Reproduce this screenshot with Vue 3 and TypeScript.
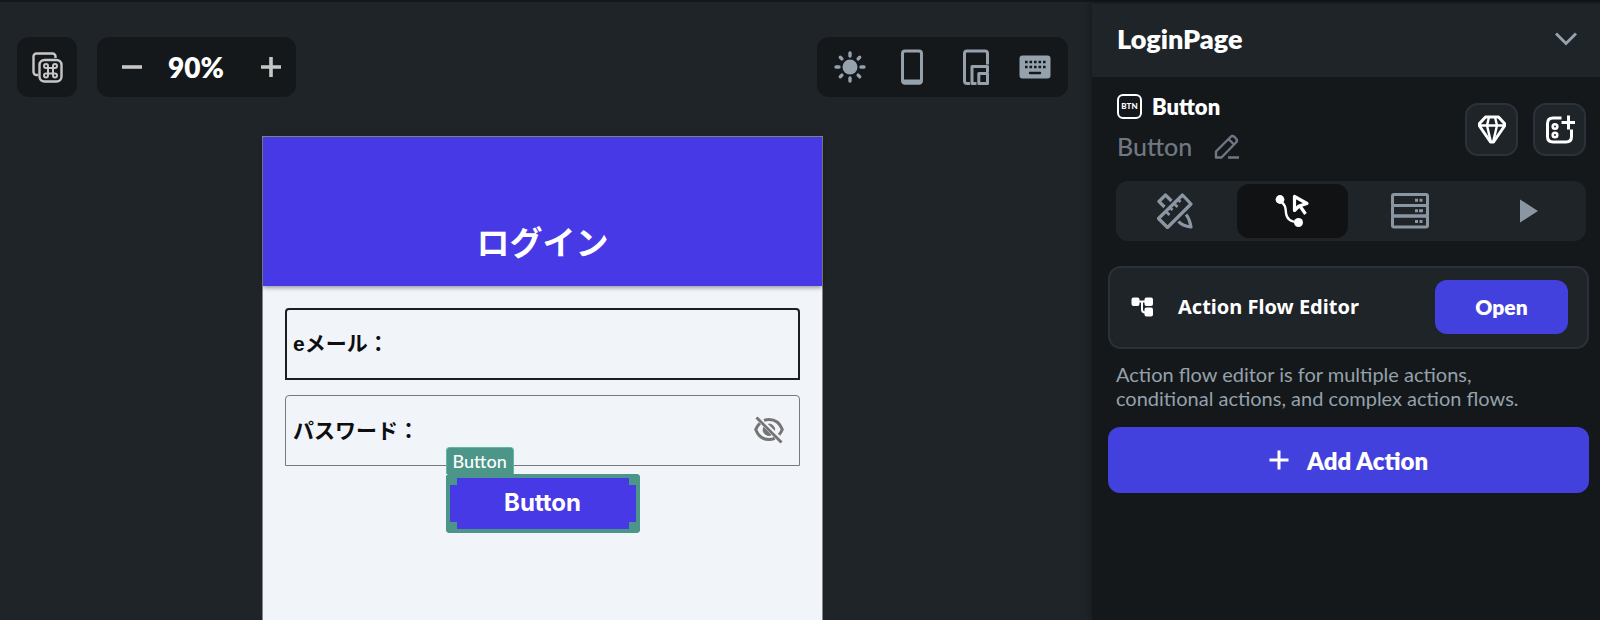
<script setup lang="ts">
import { ref } from 'vue'

type Tab = 'design' | 'actions' | 'backend' | 'preview'

const zoom = ref<number>(90)
const email = ref<string>('')
const password = ref<string>('')
const activeTab = ref<Tab>('actions')

const tabs: { id: Tab; label: string }[] = [
  { id: 'design', label: 'Design' },
  { id: 'actions', label: 'Actions' },
  { id: 'backend', label: 'Backend query' },
  { id: 'preview', label: 'Preview' },
]

function changeZoom(step: number): void {
  zoom.value = Math.min(200, Math.max(10, zoom.value + step))
}
</script>

<template>
  <div class="app">
    <main class="canvas">
      <div class="toolbar">
        <button class="tool square" type="button" aria-label="Shortcuts">
          <svg width="32" height="32" viewBox="0 0 32 32" fill="none" stroke="#c6c6c6" stroke-width="2.400">
            <path d="M7 24H5.500a3 3 0 0 1-3-3V5.500a3 3 0 0 1 3-3h16a3 3 0 0 1 3 3V7" />
            <rect x="8.500" y="9" width="22" height="21.500" rx="5" />
            <path d="M17 17h5v5.500h-5zM17 17h-2a2 2 0 1 1 2-2zM22 17v-2a2 2 0 1 1 2 2zM22 22.500h2a2 2 0 1 1-2 2zM17 22.500v2a2 2 0 1 1-2-2z" stroke-width="2" />
          </svg>
        </button>
        <div class="tool zoomer">
          <button type="button" aria-label="Zoom out" @click="changeZoom(-10)">
            <svg width="20" height="20" viewBox="0 0 20 20" stroke="#c6c6c6" stroke-width="3.600"><path d="M0 10h20" /></svg>
          </button>
          <span class="zoom-value">{{ zoom }}%</span>
          <button type="button" aria-label="Zoom in" @click="changeZoom(10)">
            <svg width="20" height="20" viewBox="0 0 20 20" stroke="#c6c6c6" stroke-width="3.600"><path d="M0 10h20M10 0v20" /></svg>
          </button>
        </div>
        <div class="tool devices">
          <button type="button" aria-label="Light mode">
            <svg width="32" height="32" viewBox="0 0 32 32" stroke="#95a1ac" stroke-width="3.400" stroke-linecap="round">
              <circle cx="16" cy="16" r="7.500" fill="#95a1ac" stroke="none" />
              <path d="M16 2v3M16 27v3M2 16h3M27 16h3M6.300 6.300l1.600 1.600M24.100 24.100l1.600 1.600M6.300 25.700l1.600-1.600M24.100 7.900l1.600-1.600" />
            </svg>
          </button>
          <button class="size" type="button" aria-label="Phone size">
            <svg width="24" height="36" viewBox="0 0 24 36">
              <rect x="2.500" y="2" width="19" height="32" rx="2.500" fill="none" stroke="#95a1ac" stroke-width="3" />
              <path d="M2 30.500h20v2.500q0 2.500-2.500 2.500h-15q-2.500 0-2.500-2.500z" fill="#95a1ac" />
            </svg>
          </button>
          <button class="sizes" type="button" aria-label="Responsive sizes">
            <svg width="26" height="36" viewBox="0 0 26 36" fill="none" stroke="#95a1ac" stroke-width="3" stroke-linejoin="round">
              <path d="M7 34.500H4q-2.500 0-2.500-2.500V4.500Q1.500 2 4 2h18q2.500 0 2.500 2.500v11" />
              <path d="M13.500 34.500H9V17.500h15.500v6" />
              <rect x="15.800" y="24.500" width="8.700" height="10" />
            </svg>
          </button>
          <button type="button" aria-label="Keyboard">
            <svg width="32" height="24" viewBox="0 0 32 24">
              <rect x="0.500" y="0.500" width="31" height="23" rx="3" fill="#95a1ac" />
              <path d="M6 7h22M6 12h22" stroke="#14181b" stroke-width="2.600" stroke-dasharray="2.600 1.900" />
              <path d="M11 18h10" stroke="#14181b" stroke-width="2.400" stroke-linecap="round" />
            </svg>
          </button>
        </div>
      </div>

      <section class="phone" lang="ja">
        <header class="phone-bar"><h1>ログイン</h1></header>
        <form class="phone-body" @submit.prevent>
          <div class="field focused">
            <label for="email">eメール：</label>
            <input id="email" v-model="email" type="email" />
          </div>
          <div class="field">
            <label for="password">パスワード：</label>
            <input id="password" v-model="password" type="password" />
            <button class="eye" type="button" aria-label="Show password">
              <svg width="32" height="30" viewBox="0 0 32 30" fill="none" stroke="#757575" stroke-width="3">
                <path d="M11 6.400Q13.500 5.500 16 5.500c6 0 11 4 13.300 10q-1.200 3-3.300 5.200M6.800 9.300Q4 12 2.700 15.500c2.300 6 7.300 10 13.300 10q3 0 5.700-1.100" />
                <path d="M15.500 10a5.800 5.800 0 0 1 6.200 6.200zM10.500 13.500a5.800 5.800 0 0 0 7.500 7.600z" fill="#757575" stroke-width="1" />
                <path d="M3.500 3.500l25 25" />
              </svg>
            </button>
          </div>
          <div class="selection">
            <span class="selection-tag">Button</span>
            <button class="submit" type="submit">Button</button>
            <i class="handle tl"></i><i class="handle tr"></i><i class="handle bl"></i><i class="handle br"></i>
          </div>
        </form>
      </section>
    </main>

    <aside class="panel">
      <header class="panel-head">
        <h2>LoginPage</h2>
        <button type="button" aria-label="Collapse">
          <svg width="22" height="14" viewBox="0 0 22 14" fill="none" stroke="#95a1ac" stroke-width="3"><path d="M1 1.500l10 10 10-10" /></svg>
        </button>
      </header>

      <div class="widget">
        <div class="names">
          <div class="type">
            <span class="btn-icon">BTN</span>
            <strong>Button</strong>
          </div>
          <div class="name">
            <span>Button</span>
            <button type="button" aria-label="Rename">
              <svg width="26" height="26" viewBox="0 0 26 26" fill="none" stroke="#6f7882" stroke-width="2.400" stroke-linejoin="round">
                <path d="M2 24.500v-6L16.500 4q2-2 4 0l1.500 1.500q2 2 0 4L7.500 24.500zM14.500 6l5.500 5.500M14 24.500h11" />
              </svg>
            </button>
          </div>
        </div>
        <button class="action" type="button" aria-label="Theme">
          <svg width="30" height="30" viewBox="0 0 30 30" fill="none" stroke="#fff" stroke-width="3" stroke-linejoin="round">
            <path d="M8.500 2h13l6 6.500v2.500L16.500 27h-3L2.500 11V8.500z" />
            <path d="M2.500 10.500h25M12 2l-2 8.500 4 17M18 2l2 8.500-4 17" stroke-width="2.400" />
          </svg>
        </button>
        <button class="action" type="button" aria-label="Create component">
          <svg width="30" height="30" viewBox="0 0 30 30" fill="none" stroke="#fff" stroke-width="3">
            <path d="M16.500 3H8q-5.500 0-5.500 5.500v13q0 5.500 5.500 5.500h13q5.500 0 5.500-5.500v-7" />
            <path d="M23.500 0.500v14M16.500 7.500h13.500" />
            <circle cx="10" cy="11.500" r="2.300" stroke-width="2.600" />
            <circle cx="10" cy="20" r="2.300" stroke-width="2.600" />
          </svg>
        </button>
      </div>

      <div class="tabs" role="tablist">
        <button
          v-for="tab in tabs"
          :key="tab.id"
          type="button"
          role="tab"
          :aria-label="tab.label"
          :aria-selected="activeTab === tab.id"
          :class="{ active: activeTab === tab.id }"
          @click="activeTab = tab.id"
        >
          <svg v-if="tab.id === 'design'" width="36" height="36" viewBox="0 0 36 36" fill="none" stroke="currentColor" stroke-width="3.200" stroke-linejoin="round">
            <path d="M25.500 2l8.500 9-23.500 23.500-9-9z" />
            <path d="M9 18.500l3.500 3.500M13 14.500l2.500 2.500M17 10.500l3.500 3.500M21 6.500l2.500 2.500" stroke-width="2.600" />
            <path d="M7.500 14L2 8.500 8.500 2l6 6" />
            <path d="M29 21.500q3.500 4 5 12.500Q25.500 33 21.500 28.500" />
          </svg>
          <svg v-else-if="tab.id === 'actions'" width="36" height="36" viewBox="0 0 36 36" fill="none" stroke="currentColor">
            <circle cx="6" cy="6.500" r="4.400" fill="currentColor" stroke="none" />
            <circle cx="24.500" cy="29.500" r="4.500" fill="currentColor" stroke="none" />
            <path d="M6 8c6 4 5.500 7 6 12s4 9 12 9" stroke-width="2.400" />
            <path d="M20.500 3.500v14l4.500-4.500 8-2.500zM26 13l5.500 8" stroke-width="3.200" stroke-linejoin="round" />
          </svg>
          <svg v-else-if="tab.id === 'backend'" width="38" height="36" viewBox="0 0 38 36" fill="none" stroke="currentColor" stroke-width="3">
            <rect x="1.500" y="1.500" width="35" height="11" rx="1.500" />
            <rect x="1.500" y="12.500" width="35" height="10.500" rx="1.500" />
            <rect x="1.500" y="23" width="35" height="11" rx="1.500" />
            <path d="M24 7.200h3M28.500 7.200h3M24 17.800h3M28 17.800h4M24 28.500h3M28.500 28.500h3" />
          </svg>
          <svg v-else width="22" height="24" viewBox="0 0 22 24" fill="currentColor"><path d="M4 0.500L22 12 4 23.500z" /></svg>
        </button>
      </div>

      <section class="flow-card">
        <svg width="22" height="20" viewBox="0 0 22 20" fill="#fff">
          <rect x="0.500" y="0.500" width="8" height="8.500" rx="2" />
          <rect x="13.500" y="0.500" width="8.500" height="8.500" rx="2" />
          <rect x="13.500" y="10.500" width="8.500" height="9" rx="2" />
          <path d="M7 4.500h8M11 4.500v8q0 3 3 3h2" fill="none" stroke="#fff" stroke-width="2" />
        </svg>
        <h3>Action Flow Editor</h3>
        <button type="button">Open</button>
      </section>
      <p class="hint">Action flow editor is for multiple actions,<br />conditional actions, and complex action flows.</p>
      <button class="add" type="button">
        <svg width="20" height="20" viewBox="0 0 20 20" stroke="#fff" stroke-width="3"><path d="M0.500 10h19M10 0.500v19" /></svg>
        <span>Add Action</span>
      </button>
    </aside>
  </div>
</template>

<style>
body {
  margin: 0;
  background: #1f2428;
}
</style>

<style scoped>
* {
  box-sizing: border-box;
}

.app {
  display: flex;
  min-height: 100vh;
  border-top: 2px solid #14181b;
  background: #1f2428;
  color: #fff;
  font-family: Lato, "Liberation Sans", sans-serif;
}

h1,
h2,
h3,
p {
  margin: 0;
}

button {
  display: flex;
  align-items: center;
  justify-content: center;
  padding: 0;
  border: 0;
  background: none;
  color: inherit;
  font: inherit;
  cursor: pointer;
}

svg {
  display: block;
  flex: none;
}

.canvas {
  flex: 1;
  display: flex;
  flex-direction: column;
  gap: 39px;
  min-width: 0;
  padding: 35px 24px 0 17px;
}

.toolbar {
  display: flex;
  gap: 20px;
}

.tool {
  display: flex;
  align-items: center;
  height: 60px;
  border-radius: 12px;
  background: #14181b;
}

.square {
  width: 60px;
}

.zoomer {
  width: 199px;
  padding: 0 15px 0 25px;
}

.zoom-value {
  margin: 0 auto 0 26px;
  font-size: 28px;
  font-weight: 800;
}

.devices {
  justify-content: space-between;
  width: 251px;
  margin-left: auto;
  padding: 0 17px;
}

.size {
  padding-left: 4px;
}

.sizes {
  padding-left: 8px;
}

.phone {
  flex: 1;
  display: flex;
  flex-direction: column;
  align-self: center;
  width: 561px;
  max-width: 100%;
  border: 1px solid #85858b;
  border-bottom: 0;
  background: #f1f4f8;
  color: #0c0e10;
  font-family: "Liberation Sans", "Noto Sans CJK JP", sans-serif;
}

.phone-bar {
  display: flex;
  align-items: flex-end;
  justify-content: center;
  height: 149px;
  padding-bottom: 18px;
  background: #4839e6;
  box-shadow: 0 2px 4px rgba(0, 0, 0, 0.35);
  color: #fff;
}

.phone-bar h1 {
  font-size: 33px;
  font-weight: 700;
  line-height: 48px;
}

.phone-body {
  display: flex;
  flex-direction: column;
  align-items: center;
  padding: 22px;
}

.field {
  display: flex;
  align-items: center;
  width: 100%;
  height: 71px;
  margin-bottom: 8px;
  padding: 0 14px 4px 7px;
  border: 1px solid #77797c;
  border-radius: 4px 4px 0 0;
}

.focused {
  height: 72px;
  margin-bottom: 15px;
  padding: 0 13px 4px 6px;
  border: 2px solid #1c1e20;
}

.field label {
  font-size: 21px;
  font-weight: 700;
  white-space: nowrap;
}

.field input {
  flex: 1;
  min-width: 0;
  padding: 0;
  border: 0;
  outline: 0;
  background: none;
  font: inherit;
}

.selection {
  position: relative;
  width: 194px;
  height: 59px;
  padding: 4px;
  border-radius: 4px;
  background: #4b9589;
}

.submit {
  width: 100%;
  height: 100%;
  padding-bottom: 2px;
  background: #4839e6;
  color: #fff;
  font-family: Inter, sans-serif;
  font-size: 24px;
  font-weight: 700;
}

.selection-tag {
  position: absolute;
  bottom: 100%;
  left: 0;
  padding: 0 6px;
  border: 1px solid #5fb8a6;
  border-bottom: 0;
  border-radius: 4px 4px 0 0;
  background: #4b9589;
  color: #fff;
  font-family: Lato, sans-serif;
  font-size: 18px;
  font-weight: 500;
  line-height: 26px;
}

.handle {
  position: absolute;
  width: 11px;
  height: 11px;
  background: #4b9589;
}

.tl {
  top: 0;
  left: 0;
  border-top-left-radius: 4px;
}

.tr {
  top: 0;
  right: 0;
  border-top-right-radius: 4px;
}

.bl {
  bottom: 0;
  left: 0;
  border-bottom-left-radius: 4px;
}

.br {
  right: 0;
  bottom: 0;
  border-bottom-right-radius: 4px;
}

.panel {
  display: flex;
  flex-direction: column;
  flex: none;
  width: 508px;
  background: #14181b;
  box-shadow: 0 0 10px rgba(0, 0, 0, 0.4);
}

.panel-head {
  display: flex;
  align-items: center;
  justify-content: space-between;
  height: 75px;
  padding: 0 23px 4px 25px;
  border-top: 2px solid #191d20;
  background: #1f2428;
}

.panel-head h2 {
  font-size: 27px;
  font-weight: 800;
}

.widget {
  display: flex;
  align-items: flex-start;
  gap: 15px;
  padding: 14px 14px 0 25px;
}

.names {
  flex: 1;
}

.type {
  display: flex;
  align-items: center;
  gap: 10px;
  height: 30px;
}

.type strong {
  font-size: 22px;
  font-weight: 800;
}

.btn-icon {
  display: grid;
  place-items: center;
  width: 25px;
  height: 25px;
  border: 2px solid #fff;
  border-radius: 6px;
  font-size: 8px;
  font-weight: 900;
}

.name {
  display: flex;
  align-items: center;
  gap: 22px;
  height: 50px;
  color: #6f7882;
  font-size: 25px;
  font-weight: 500;
}

.action {
  width: 53px;
  height: 53px;
  margin-top: 12px;
  border: 2px solid #2b323b;
  border-radius: 13px;
  background: #1f2428;
}

.tabs {
  display: flex;
  gap: 6px;
  height: 60px;
  margin: 10px 14px 0 24px;
  padding: 3px;
  border-radius: 12px;
  background: #1f2428;
}

.tabs button {
  flex: 1;
  border-radius: 12px;
  color: #8b96a3;
}

.tabs .active {
  background: #101213;
  color: #fff;
}

.flow-card {
  display: flex;
  align-items: center;
  height: 83px;
  margin: 25px 11px 0 16px;
  padding: 0 19px 2px 21px;
  border: 2px solid #2b313a;
  border-radius: 13px;
  background: #1f2428;
}

.flow-card h3 {
  flex: 1;
  margin-left: 25px;
  font-family: "Noto Sans", sans-serif;
  font-size: 20px;
  font-weight: 700;
}

.flow-card button {
  width: 133px;
  height: 54px;
  border-radius: 12px;
  background: #4341dd;
  font-size: 21px;
  font-weight: 800;
}

.hint {
  margin: 13px 15px 0 24px;
  color: #95a1ac;
  font-size: 20px;
  line-height: 24px;
}

.add {
  gap: 18px;
  height: 66px;
  margin: 17px 11px 0 16px;
  border-radius: 12px;
  background: #4341dd;
  font-size: 24px;
  font-weight: 800;
}
</style>
